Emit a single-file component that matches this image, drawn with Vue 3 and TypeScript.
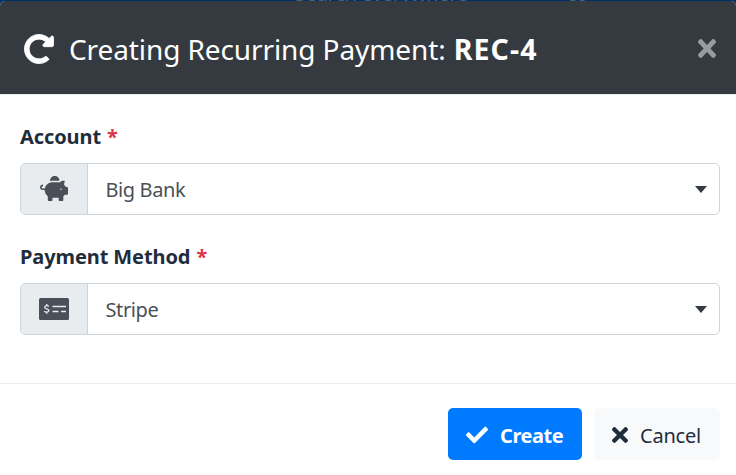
<script setup lang="ts">
interface Field {
  label: string
  value: string
  viewBox: string
  icon: string
}

const icons = {
  redo: 'M256.455 8c66.269.119 126.437 26.233 170.859 68.685l35.715-35.715C478.149 25.851 504 36.559 504 57.941V192c0 13.255-10.745 24-24 24H345.941c-21.382 0-32.09-25.851-16.971-40.971l41.75-41.75c-30.864-28.899-70.801-44.907-113.23-45.273-92.398-.798-170.283 73.977-169.484 169.442C88.764 348.009 162.184 424 256 424c41.127 0 79.997-14.678 110.629-41.556 4.743-4.161 11.906-3.908 16.368.553l39.662 39.662c4.872 4.872 4.631 12.815-.482 17.433C378.202 479.813 319.926 504 256 504 119.034 504 8.001 392.967 8 256.002 7.999 119.193 119.646 7.755 256.455 8z',
  times: 'M242.72 256l100.07-100.07c12.28-12.28 12.28-32.19 0-44.48l-22.24-22.24c-12.28-12.28-32.19-12.28-44.48 0L176 189.28 75.93 89.21c-12.28-12.28-32.19-12.28-44.48 0L9.21 111.45c-12.28 12.28-12.28 32.19 0 44.48L109.28 256 9.21 356.07c-12.28 12.28-12.28 32.19 0 44.48l22.24 22.24c12.28 12.28 32.2 12.28 44.48 0L176 322.72l100.07 100.07c12.28 12.28 32.2 12.28 44.48 0l22.24-22.24c12.28-12.28 12.28-32.19 0-44.48L242.72 256z',
  check: 'M173.898 439.404l-166.4-166.4c-9.997-9.997-9.997-26.206 0-36.204l36.203-36.204c9.997-9.998 26.207-9.998 36.204 0L192 312.69 432.095 72.596c9.997-9.997 26.207-9.997 36.204 0l36.203 36.204c9.997 9.997 9.997 26.206 0 36.204l-294.4 294.401c-9.998 9.997-26.207 9.997-36.204-.001z',
}

const fields: Field[] = [
  {
    label: 'Account',
    value: 'Big Bank',
    viewBox: '0 0 576 512',
    icon: 'M560 224h-29.5c-8.8-20-21.6-37.7-37.4-52.5L512 96h-32c-29.4 0-55.4 13.5-73 34.3-7.6-1.1-15.1-2.3-23-2.3H256c-77.400 0-141.900 55-156.800 128H56c-14.800 0-26.500-13.500-23.500-28.800C34.700 215.800 45.400 208 57 208h1c3.300 0 6-2.700 6-6v-20c0-3.300-2.700-6-6-6-28.500 0-53.900 20.400-57.500 48.600C-3.900 258.800 22.700 288 56 288h40c0 52.200 25.400 98.100 64 127.300V496c0 8.800 7.200 16 16 16h64c8.800 0 16-7.200 16-16v-48h128v48c0 8.800 7.200 16 16 16h64c8.800 0 16-7.200 16-16v-80.700c11.800-8.900 22.300-19.400 31.300-31.300H560c8.800 0 16-7.200 16-16V240c0-8.800-7.200-16-16-16zM432 288c-8.800 0-16-7.200-16-16s7.200-16 16-16 16 7.200 16 16-7.200 16-16 16zM256 96h128c5.400 0 10.700.4 15.900.8 0-.3.1-.5.1-.8 0-53-43-96-96-96s-96 43-96 96c0 2.100.5 4.100.6 6.200 15.200-3.900 31-6.200 47.400-6.200z',
  },
  {
    label: 'Payment Method',
    value: 'Stripe',
    viewBox: '0 0 30 22',
    icon: '',
  },
]
</script>

<template>
  <div class="page">
    <div class="backdrop"><span class="behind">Search everywhere</span><span class="behind">co</span></div>
    <section class="modal">
      <header class="head">
        <svg class="redo" viewBox="0 0 512 512"><path :d="icons.redo" /></svg>
        <h5 class="title">Creating Recurring Payment: <b class="number">REC-4</b></h5>
        <button class="close" type="button">
          <svg viewBox="0 80 352 352" preserveAspectRatio="none"><path :d="icons.times" /></svg>
        </button>
      </header>
      <div class="body">
        <div v-for="f in fields" :key="f.label" class="group">
          <label class="label">{{ f.label }} <span class="star">*</span></label>
          <div class="control">
            <div class="addon">
              <svg v-if="f.icon" class="pig" :viewBox="f.viewBox"><path :d="f.icon" /></svg>
              <svg v-else class="money" :viewBox="f.viewBox">
                <rect width="30" height="22" rx="1.5" />
                <path class="cut" d="M13.500 8.500H27M13.500 13.500H19.500M22 13.500H27M9.800 8.600C9.200 7.300 5.700 7.300 5.700 9.200c0 2 4.200 1.300 4.200 3.400 0 2-3.800 1.800-4.600.5M7.800 6v1.800M7.800 14V15.800" />
              </svg>
            </div>
            <div class="select">
              <span class="value">{{ f.value }}</span>
              <span class="caret"></span>
            </div>
          </div>
        </div>
      </div>
      <footer class="foot">
        <button class="btn primary" type="button">
          <svg class="tick" viewBox="0 0 512 512"><path :d="icons.check" /></svg>
          <b class="create">Create</b>
        </button>
        <button class="btn light" type="button">
          <svg class="cross" viewBox="0 80 352 352"><path :d="icons.times" /></svg>
          <span class="cancel">Cancel</span>
        </button>
      </footer>
    </section>
  </div>
</template>

<style>
body {
  background: #003069;
}
</style>

<style scoped>
.page {
  height: 475px;
  overflow: hidden;
  font-family: "Noto Sans", "Open Sans", sans-serif;
  font-size: 20px;
  color: #1f2d3d;
}
svg {
  display: block;
  flex: none;
  fill: currentColor;
}
.backdrop {
  height: 1px;
  overflow: hidden;
  display: flex;
  align-items: flex-end;
  gap: 99px;
  padding-left: 295px;
}
.behind {
  line-height: 14px;
  height: 14px;
  letter-spacing: -0.3px;
  color: #4c6075;
}
.modal {
  height: 474px;
  background: #fff;
  border-radius: 5px 5px 0 0;
  overflow: hidden;
}
.head {
  box-sizing: border-box;
  height: 94px;
  display: flex;
  align-items: center;
  padding: 2px 20px 0 24px;
  color: #fff;
  background: #343a40;
  border-bottom: 1px solid #e9ecef;
}
.redo {
  width: 30px;
  height: 30px;
  overflow: visible;
  stroke: currentColor;
  stroke-width: 14;
}
.title {
  margin: 0 0 0 15px;
  flex: 1;
  font-size: 28px;
  font-weight: 400;
  line-height: 42px;
  white-space: nowrap;
  letter-spacing: -0.1px;
}
.number {
  margin-left: 1px;
  font-size: 28.5px;
  line-height: 1;
  letter-spacing: 1.1px;
}
button {
  font: inherit;
  border: 0;
  margin: 0;
  padding: 0;
}
.close {
  background: none;
  color: #999c9f;
}
.close svg {
  width: 18px;
  height: 19px;
}
.body {
  box-sizing: border-box;
  height: 289px;
  padding: 27px 16px 0 20px;
  border-bottom: 1px solid #e9ecef;
}
.group {
  height: 120px;
}
.label {
  display: block;
  height: 30px;
  line-height: 30px;
  margin-bottom: 11px;
  font-weight: 700;
  letter-spacing: -0.1px;
}
.star {
  margin-left: 1px;
  color: #dc3545;
}
.control {
  box-sizing: border-box;
  height: 52px;
  display: flex;
  border: 1px solid #ced4da;
  border-radius: 5px;
  overflow: hidden;
}
.addon {
  width: 66px;
  display: flex;
  align-items: center;
  justify-content: center;
  background: #e9ecef;
  border-right: 1px solid #ced4da;
  color: #495057;
}
.pig {
  width: 28px;
  height: 25px;
  margin-bottom: 1px;
}
.money {
  width: 30px;
  height: 22px;
}
.cut {
  fill: none;
  stroke: #e9ecef;
  stroke-width: 1.3;
}
.select {
  flex: 1;
  display: flex;
  align-items: center;
  justify-content: space-between;
  padding: 0 12px 0 17.5px;
  color: #495057;
}
.value {
  letter-spacing: -0.4px;
}
.caret {
  border: 6px solid transparent;
  border-top: 7px solid #343a40;
  border-bottom: 0;
}
.foot {
  display: flex;
  justify-content: flex-end;
  gap: 12px;
  padding: 24px 16px 0;
}
.btn {
  box-sizing: border-box;
  height: 52px;
  display: flex;
  align-items: center;
  gap: 12px;
  padding: 2px 0 0 18px;
  border-radius: 5px;
}
.primary {
  width: 134px;
  background: #007bff;
  color: #fff;
}
.light {
  width: 126px;
  background: #f8f9fa;
  color: #1f2d3d;
}
.create {
  letter-spacing: -0.45px;
}
.cancel {
  letter-spacing: -0.2px;
}
.tick {
  width: 22px;
  height: 22px;
}
.cross {
  width: 16px;
  height: 16px;
}
</style>
